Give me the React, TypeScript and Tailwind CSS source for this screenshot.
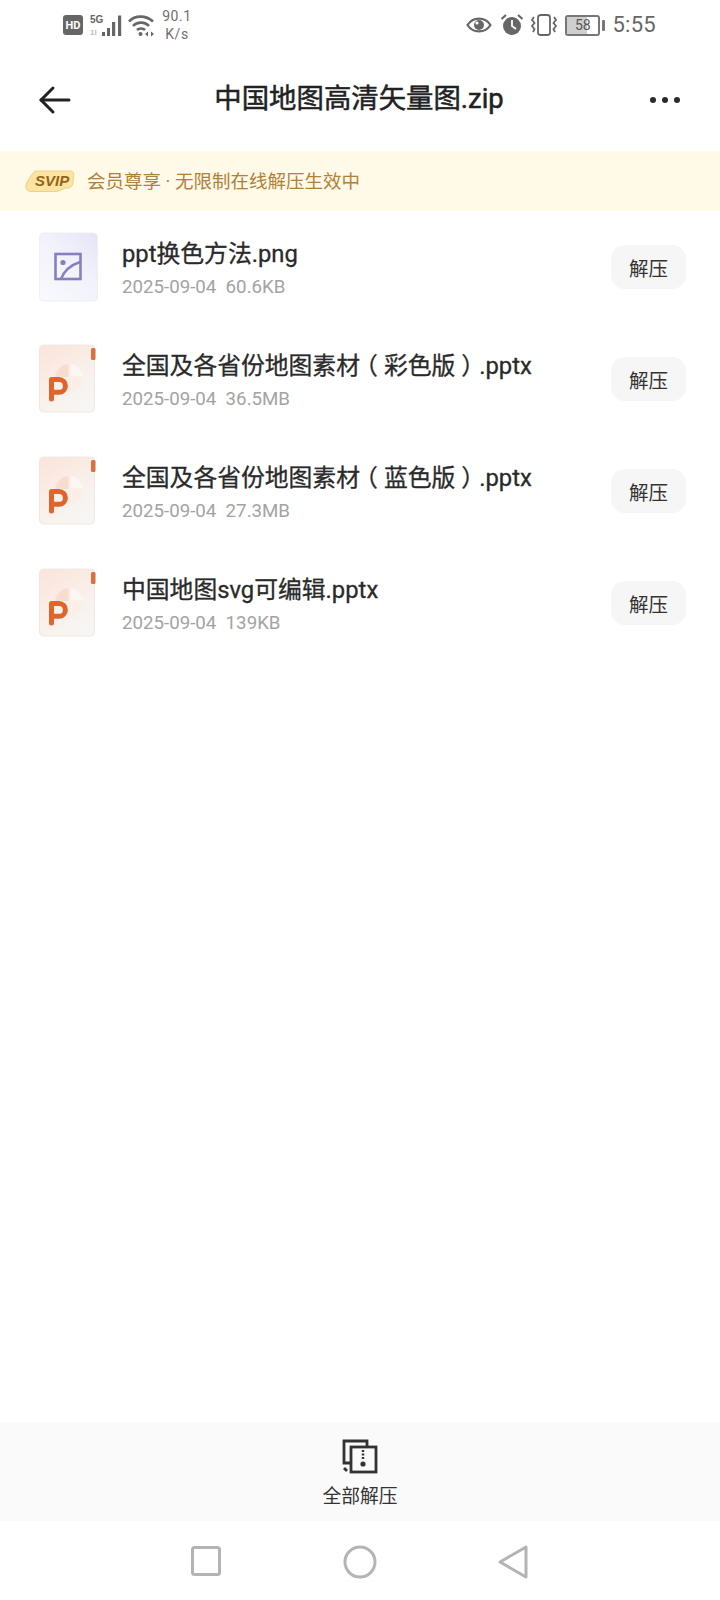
import React from "react";

function ImageFileIcon() {
  return (
    <svg width="60" height="70" viewBox="0 0 60 70" className="shrink-0">
      <defs>
        <linearGradient id="imgbg" x1="1" y1="0" x2="0.2" y2="1">
          <stop offset="0" stopColor="#e6e4f5" />
          <stop offset="0.45" stopColor="#f1f1fb" />
          <stop offset="1" stopColor="#f8f9fd" />
        </linearGradient>
      </defs>
      <rect x="0.5" y="1" width="58" height="68" rx="4" fill="url(#imgbg)" stroke="#eeeef4" />
      <rect x="16.5" y="22" width="25" height="25" fill="none" stroke="#8580bf" strokeWidth="2.6" />
      <circle cx="24" cy="30.5" r="2.6" fill="#8580bf" />
      <path d="M22 47 C 25 39 32 33 41 30" fill="none" stroke="#8580bf" strokeWidth="2.4" />
    </svg>
  );
}

function PptFileIcon({ id }: { id: string }) {
  return (
    <svg width="60" height="70" viewBox="0 0 60 70" className="shrink-0">
      <defs>
        <linearGradient id={id} x1="0.2" y1="0" x2="0.7" y2="1">
          <stop offset="0" stopColor="#fbe5dc" />
          <stop offset="0.55" stopColor="#f9f0ea" />
          <stop offset="1" stopColor="#f7f6f4" />
        </linearGradient>
      </defs>
      <rect x="0.5" y="1" width="55" height="67" rx="4" fill={`url(#${id})`} stroke="#efe8e4" />
      <path d="M32 20 A 14 14 0 0 1 44 32 L 32 32 Z" fill="#fdf7f3" />
      <path d="M29.5 20 A 15 15 0 0 0 16 33 L 29.5 33 Z" fill="#f8dccf" />
      <path d="M32 35 L 44 35 A 14 14 0 0 1 30 48 L 30 40 Z" fill="#fbeee7" />
      <rect x="52" y="4" width="4.5" height="12" rx="1.5" fill="#d9703d" />
      <path
        d="M12.5 55 V 35.5 H 20 A 6.4 6.4 0 0 1 20 48.3 H 12.5"
        fill="none"
        stroke="#df652b"
        strokeWidth="5"
        strokeLinecap="round"
        strokeLinejoin="round"
      />
    </svg>
  );
}

function Paren({ children }: { children: React.ReactNode }) {
  return <span className="mx-[6px] [font-feature-settings:'halt']">{children}</span>;
}

const files: { name: React.ReactNode; meta: string; img?: boolean }[] = [
  { name: "ppt换色方法.png", meta: "2025-09-04\u00a0\u00a060.6KB", img: true },
  {
    name: (
      <>
        全国及各省份地图素材<Paren>（</Paren>彩色版<Paren>）</Paren>.pptx
      </>
    ),
    meta: "2025-09-04\u00a0\u00a036.5MB",
  },
  {
    name: (
      <>
        全国及各省份地图素材<Paren>（</Paren>蓝色版<Paren>）</Paren>.pptx
      </>
    ),
    meta: "2025-09-04\u00a0\u00a027.3MB",
  },
  { name: "中国地图svg可编辑.pptx", meta: "2025-09-04\u00a0\u00a0139KB" },
];

function StatusBar() {
  return (
    <div className="h-[60px] flex items-start justify-between pl-[63px] pr-[64px] pt-[7px] text-[#5f5f5f]">
      <div className="flex items-center h-[36px]">
        <div className="w-[20px] h-[20px] rounded-[3px] bg-[#666] text-white text-[11px] font-bold flex items-center justify-center leading-none">HD</div>
        <svg width="33" height="24" viewBox="0 0 33 24" className="ml-[7px] mt-[1px]">
          <text x="0" y="9" fontSize="10" fontWeight="700" fill="#666" fontFamily="'Liberation Sans', sans-serif">5G</text>
          <text x="0" y="21" fontSize="8" fontWeight="700" fill="#bbb" fontFamily="'Liberation Sans', sans-serif">1l</text>
          <rect x="12" y="18" width="3" height="4" fill="#666" />
          <rect x="17" y="14" width="3" height="8" fill="#666" />
          <rect x="22" y="8" width="3.2" height="14" fill="#666" />
          <rect x="28" y="1.5" width="3.2" height="20.5" fill="#666" />
        </svg>
        <svg width="27" height="23" viewBox="0 0 27 23" fill="none" stroke="#666" strokeWidth="2.6" className="ml-[5px]">
          <path d="M1 7.5 C 7 1 18 1 25 7.5" />
          <path d="M5 12 C 9 7.5 17 7.5 21 12" />
          <path d="M9 16 C 11 14 15 14 17 16" />
          <circle cx="12.5" cy="20" r="2" fill="#666" stroke="none" />
          <path d="M17 20 l3 -2.5 v5 z M26 20 l-3 -2.5 v5 z" fill="#666" stroke="none" />
        </svg>
        <div className="ml-[6px] w-[32px] text-center text-[14px] leading-[18px] tracking-[0.6px] -mt-[1px] text-[#707070]">90.1<br />K/s</div>
      </div>
      <div className="flex items-center h-[36px]">
        <svg width="26" height="20" viewBox="0 0 26 20" fill="none" stroke="#666" strokeWidth="2.2" className="ml-[1px]">
          <path d="M1.5 10 C 7 1.5 19 1.5 24.5 10 C 19 18.5 7 18.5 1.5 10 Z" />
          <circle cx="13" cy="10" r="5" fill="#666" stroke="none" />
          <circle cx="11" cy="8" r="1.6" fill="#fff" stroke="none" />
        </svg>
        <svg width="24" height="24" viewBox="0 0 24 24" className="ml-[8px]">
          <circle cx="12" cy="13" r="9" fill="#666" />
          <path d="M12 7 V13 L16 16" fill="none" stroke="#fff" strokeWidth="1.8" />
          <path d="M1.5 6 L6 2 M22.5 6 L18 2" stroke="#666" strokeWidth="2.2" />
        </svg>
        <svg width="28" height="22" viewBox="0 0 28 22" fill="none" stroke="#666" strokeWidth="1.8" className="ml-[6px]">
          <rect x="8" y="1" width="12" height="20" rx="2.5" />
          <path d="M4 3 L2 6 L4.5 9 L2 12 L4.5 15 L3 18" />
          <path d="M24 3 L26 6 L23.5 9 L26 12 L23.5 15 L25 18" />
        </svg>
        <div className="ml-[7px] relative w-[35px] h-[21px] rounded-[3px] border-2 border-[#777] overflow-hidden">
          <div className="w-[20px] h-full bg-[#cfcfcf]" />
          <div className="absolute inset-0 flex items-center justify-center text-[14px] text-[#555] leading-none">58</div>
        </div>
        <div className="ml-[2px] w-[3px] h-[11px] rounded-[1px] bg-[#777]" />
        <div className="ml-[7px] text-[22px] leading-none tracking-[0.3px] text-[#666]">5:55</div>
      </div>
    </div>
  );
}

function Header() {
  return (
    <div className="h-[91px] flex items-center justify-between pl-[38px] pr-[40px] pb-[12px]">
      <svg width="34" height="30" viewBox="0 0 34 30" fill="none" stroke="#222" strokeWidth="3" strokeLinecap="round" strokeLinejoin="round">
        <path d="M3 15 H 31" />
        <path d="M15 3 L 3 15 L 15 27" />
      </svg>
      <div className="text-[27.4px] leading-none text-[#222] ml-[-4px] [-webkit-text-stroke:0.5px_#222]">中国地图高清矢量图.zip</div>
      <div className="flex gap-[6px] items-center">
        <span className="w-[6px] h-[6px] rounded-full bg-[#2a2a2a]" />
        <span className="w-[6px] h-[6px] rounded-full bg-[#2a2a2a]" />
        <span className="w-[6px] h-[6px] rounded-full bg-[#2a2a2a]" />
      </div>
    </div>
  );
}

function Banner() {
  return (
    <div className="h-[60px] bg-[#fff9e8] flex items-center pl-[25px] gap-[12px]">
      <svg width="50" height="24" viewBox="0 0 50 24">
        <path d="M10 2 H 45 C 49 2 49 5 48.5 9 C 48 16 47 19 42 19 C 38 19 36 22.5 30 22.5 H 6 C 2 22.5 0 19 1 15.5 C 3 11 6 6 10 2 Z" fill="#fbe3a2" stroke="#efd184" strokeWidth="1" />
        <text x="10" y="17" fontSize="15" fontWeight="700" fontStyle="italic" fill="#946318" fontFamily="'Liberation Sans', sans-serif">SVIP</text>
      </svg>
      <div className="text-[18.5px] leading-none pt-[2px] text-[#b08138]">会员尊享 · 无限制在线解压生效中</div>
    </div>
  );
}

function Row({ f, i }: { f: (typeof files)[number]; i: number }) {
  return (
    <div className="h-[112px] flex items-center pl-[39px] pr-[34px]">
      {f.img ? <ImageFileIcon /> : <PptFileIcon id={`ppt${i}`} />}
      <div className="ml-[23px] flex-1 min-w-0 pt-[4px]">
        <div className="text-[23.8px] leading-[28px] text-[#2a2a2a] [-webkit-text-stroke:0.3px_#2a2a2a]">{f.name}</div>
        <div className="mt-[8px] text-[18.7px] leading-[22px] text-[#a3a3a3]">{f.meta}</div>
      </div>
      <div className="w-[75px] h-[44px] pt-[5px] rounded-[14px] bg-[#f6f6f6] flex items-center justify-center text-[19.5px] text-[#333]">解压</div>
    </div>
  );
}

function BottomBar() {
  return (
    <div className="h-[99px] bg-[#fafafa] flex flex-col items-center pt-[17px]">
      <svg width="38" height="36" viewBox="0 0 38 36" fill="none" stroke="#333" strokeWidth="2.8">
        <path d="M9 24 H 3 V 2 H 26 V 8" />
        <rect x="10" y="8" width="25" height="25" fill="#fafafa" />
        <path d="M22 11 V 21" strokeWidth="2.4" strokeDasharray="2 1.5" />
        <circle cx="22" cy="25" r="2.6" fill="#333" stroke="none" />
        <path d="M3 29 L 6 32" />
      </svg>
      <div className="mt-[10px] text-[18.8px] leading-[24px] text-[#333]">全部解压</div>
    </div>
  );
}

function NavBar() {
  return (
    <div className="h-[79px] flex items-start justify-center pt-[25px] pr-[1px] gap-[122px]">
      <svg width="30" height="30" viewBox="0 0 30 30" fill="none" stroke="#b4b4b4" strokeWidth="3">
        <rect x="1.5" y="1.5" width="27" height="27" rx="2" />
      </svg>
      <svg width="34" height="34" viewBox="0 0 34 34" fill="none" stroke="#b4b4b4" strokeWidth="3" className="-mt-[1px]">
        <circle cx="17" cy="17" r="15" />
      </svg>
      <svg width="30" height="34" viewBox="0 0 30 34" fill="none" stroke="#b4b4b4" strokeWidth="3" strokeLinejoin="round" className="-mt-[1px] -ml-[1px]">
        <path d="M2 17 L 28 2 V 32 Z" />
      </svg>
    </div>
  );
}

export default function App() {
  return (
    <div className="w-[720px] h-[1600px] bg-white flex flex-col overflow-hidden font-['Roboto','Noto_Sans_CJK_SC',sans-serif] [text-spacing-trim:space-all]">
      <StatusBar />
      <Header />
      <Banner />
      <div className="flex-1">
        {files.map((f, i) => (
          <Row key={i} f={f} i={i} />
        ))}
      </div>
      <BottomBar />
      <NavBar />
    </div>
  );
}
